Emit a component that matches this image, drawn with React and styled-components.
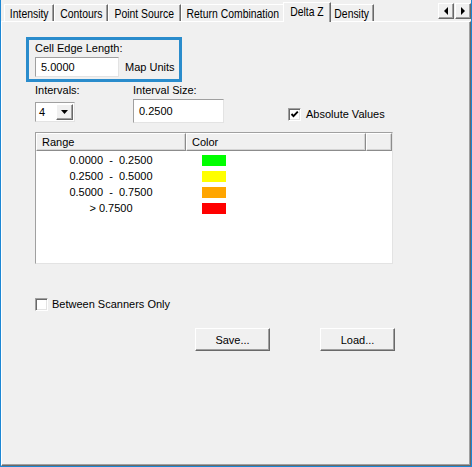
import React from "react";
import styled, { createGlobalStyle } from "styled-components";

const Global = createGlobalStyle`
  html, body { margin: 0; padding: 0; background: #f0f0f0; }
  body { font-family: "Liberation Sans", Arial, sans-serif; font-size: 11px; color: #000; }
  * { box-sizing: border-box; }
`;

const Window = styled.div`
  width: 472px;
  height: 467px;
  border-left: 1px solid #1c87d4;
  border-right: 1px solid #1c87d4;
  border-bottom: 1px solid #1c87d4;
  background: #f0f0f0;
  display: flex;
  flex-direction: column;
`;

const TabStrip = styled.div`
  height: 21px;
  flex: none;
  display: flex;
  align-items: flex-end;
  padding-left: 3px;
  position: relative;
  z-index: 2;
`;

const Tab = styled.div`
  width: ${(p) => p.$w}px;
  height: ${(p) => (p.$active ? 20 : 17)}px;
  margin: 0 ${(p) => (p.$active ? -2 : 0)}px ${(p) => (p.$active ? -1 : 0)}px;
  padding-bottom: ${(p) => (p.$active ? 2 : 0)}px;
  border-top: 1px solid #fff;
  border-left: 1px solid #fff;
  border-right: 1px solid #696969;
  box-shadow: inset -1px 0 #a0a0a0;
  background: #f0f0f0;
  display: flex;
  justify-content: center;
  align-items: center;
  white-space: nowrap;
  position: relative;
  z-index: ${(p) => (p.$active ? 2 : 1)};
`;

const TabText = styled.span`
  display: inline-block;
  font-family: "Liberation Sans", Arial, sans-serif;
  font-size: 13px;
  line-height: 15px;
  transform: scaleX(0.8);
  transform-origin: center;
`;

const ScrollArrows = styled.div`
  margin-left: auto;
  align-self: flex-start;
  margin-top: 3px;
  display: flex;
  gap: 1px;
`;

const ArrowButton = styled.div`
  width: 16px;
  height: 16px;
  background: #f0f0f0;
  border-top: 1px solid #fff;
  border-left: 1px solid #fff;
  border-right: 1px solid #696969;
  border-bottom: 1px solid #696969;
  box-shadow: inset -1px -1px #a0a0a0;
  display: flex;
  align-items: center;
  justify-content: center;
`;

const Panel = styled.div`
  flex: 1;
  border-top: 1px solid #fff;
  border-left: 1px solid #fff;
  border-right: 1px solid #696969;
  border-bottom: 1px solid #696969;
  box-shadow: inset -1px -1px #a0a0a0;
  padding: 15px 0 0 33px;
  display: flex;
  flex-direction: column;
  align-items: flex-start;
  position: relative;
  z-index: 1;
`;

const HighlightBox = styled.div`
  margin-left: -9px;
  width: 156px;
  border: 3px solid #2a8ccc;
  padding: 2px 0 2px 6px;
`;

const Label = styled.div`
  line-height: 13px;
  white-space: nowrap;
`;

const InputRow = styled.div`
  display: flex;
  align-items: center;
  margin-top: 2px;
`;

const TextInput = styled.div`
  width: ${(p) => p.$w}px;
  height: ${(p) => p.$h}px;
  margin-top: ${(p) => p.$mt || 0}px;
  background: #fff;
  border: 1px solid;
  border-color: #a0a0a0 #e3e3e3 #e3e3e3 #a0a0a0;
  padding-left: 5px;
  display: flex;
  align-items: center;
`;

const Unit = styled.span`
  margin-left: 6px;
`;

const ControlRow = styled.div`
  display: flex;
  margin-top: 2px;
`;

const Field = styled.div`
  width: ${(p) => p.$w}px;
  display: flex;
  flex-direction: column;
  align-items: flex-start;
`;

const Combo = styled.div`
  width: 40px;
  height: 20px;
  margin-top: 5px;
  background: #fff;
  border: 1px solid;
  border-color: #a0a0a0 #e3e3e3 #e3e3e3 #a0a0a0;
  display: flex;
  align-items: center;
  padding: 1px 1px 1px 3px;
`;

const ComboValue = styled.span`
  flex: 1;
`;

const DropButton = styled.div`
  width: 17px;
  height: 16px;
  background: #f0f0f0;
  border-top: 1px solid #fff;
  border-left: 1px solid #fff;
  border-right: 1px solid #696969;
  border-bottom: 1px solid #696969;
  box-shadow: inset -1px -1px #a0a0a0;
  display: flex;
  align-items: center;
  justify-content: center;
`;

const CheckLine = styled.label`
  display: flex;
  align-items: center;
  margin-top: ${(p) => p.$mt || 0}px;
  align-self: flex-start;
  line-height: 13px;
`;

const CheckBox = styled.span`
  width: 13px;
  height: 13px;
  background: #fff;
  border: 1px solid;
  border-color: #a0a0a0 #fff #fff #a0a0a0;
  box-shadow: inset 1px 1px #696969, inset -1px -1px #e3e3e3;
  display: flex;
  align-items: center;
  justify-content: center;
  margin-right: ${(p) => p.$gap}px;
`;

const ListView = styled.div`
  margin-top: 9px;
  width: 358px;
  height: 132px;
  background: #fff;
  border: 1px solid;
  border-color: #a0a0a0 #e3e3e3 #e3e3e3 #a0a0a0;
  display: flex;
  flex-direction: column;
`;

const HeaderRow = styled.div`
  display: flex;
  height: 18px;
`;

const HeaderCell = styled.div`
  width: ${(p) => (p.$w ? `${p.$w}px` : "auto")};
  flex: ${(p) => (p.$w ? "none" : 1)};
  background: #f0f0f0;
  border-top: 1px solid #fff;
  border-left: 1px solid #fff;
  border-right: 1px solid #8c8c8c;
  border-bottom: 1px solid #8c8c8c;
  box-shadow: inset -1px -1px #d4d4d4;
  padding-left: 5px;
  display: flex;
  align-items: center;
`;

const Rows = styled.div`
  padding-top: 1px;
`;

const Row = styled.div`
  display: flex;
  height: 16px;
  align-items: center;
`;

const RangeCell = styled.div`
  width: 150px;
  text-align: center;
  white-space: pre;
`;

const ColorCell = styled.div`
  padding-left: 16px;
  display: flex;
  align-items: center;
`;

const Swatch = styled.div`
  width: 24px;
  height: 11px;
  background: ${(p) => p.$c};
`;

const ButtonRow = styled.div`
  display: flex;
  gap: 50px;
  margin-left: 160px;
  margin-top: 17px;
`;

const Button = styled.div`
  width: 75px;
  height: 23px;
  background: #f0f0f0;
  border-top: 1px solid #fff;
  border-left: 1px solid #fff;
  border-right: 1px solid #696969;
  border-bottom: 1px solid #696969;
  box-shadow: inset -1px -1px #a0a0a0;
  display: flex;
  align-items: center;
  justify-content: center;
`;

const tabs = [
  { label: "Intensity", w: 50 },
  { label: "Contours", w: 54 },
  { label: "Point Source", w: 73 },
  { label: "Return Combination", w: 104 },
  { label: "Delta Z", w: 48, active: true },
  { label: "Density", w: 45 },
];

const ranges = [
  { text: "0.0000  -  0.2500", color: "#00ff00" },
  { text: "0.2500  -  0.5000", color: "#ffff00" },
  { text: "0.5000  -  0.7500", color: "#ffa500" },
  { text: "> 0.7500", color: "#ff0000" },
];

const Tri = ({ dir }) => {
  const pts = {
    left: "5,0 5,8 1,4",
    right: "1,0 1,8 5,4",
    down: "0,0 7,0 3.5,4",
  }[dir];
  const w = dir === "down" ? 7 : 6;
  const h = dir === "down" ? 4 : 8;
  return (
    <svg width={w} height={h} viewBox={`0 0 ${w} ${h}`}>
      <polygon points={pts} fill="#000" />
    </svg>
  );
};

const Check = () => (
  <svg width="9" height="9" viewBox="0 0 9 9">
    <polyline points="1.5,4 3.5,6.2 7.8,1.6" fill="none" stroke="#000" strokeWidth="1.9" />
  </svg>
);

export default function App() {
  return (
    <>
      <Global />
      <Window>
        <TabStrip>
          {tabs.map((t) => (
            <Tab key={t.label} $w={t.w} $active={t.active}>
              <TabText>{t.label}</TabText>
            </Tab>
          ))}
          <ScrollArrows>
            <ArrowButton>
              <Tri dir="left" />
            </ArrowButton>
            <ArrowButton>
              <Tri dir="right" />
            </ArrowButton>
          </ScrollArrows>
        </TabStrip>
        <Panel>
          <HighlightBox>
            <Label>Cell Edge Length:</Label>
            <InputRow>
              <TextInput $w={84} $h={20}>5.0000</TextInput>
              <Unit>Map Units</Unit>
            </InputRow>
          </HighlightBox>
          <ControlRow>
            <Field $w={98}>
              <Label>Intervals:</Label>
              <Combo>
                <ComboValue>4</ComboValue>
                <DropButton>
                  <Tri dir="down" />
                </DropButton>
              </Combo>
            </Field>
            <Field $w={155}>
              <Label>Interval Size:</Label>
              <TextInput $w={91} $h={24} $mt={2}>0.2500</TextInput>
            </Field>
            <CheckLine $mt={24}>
              <CheckBox $gap={5}>
                <Check />
              </CheckBox>
              Absolute Values
            </CheckLine>
          </ControlRow>
          <ListView>
            <HeaderRow>
              <HeaderCell $w={150}>Range</HeaderCell>
              <HeaderCell $w={180}>Color</HeaderCell>
              <HeaderCell />
            </HeaderRow>
            <Rows>
              {ranges.map((r) => (
                <Row key={r.text}>
                  <RangeCell>{r.text}</RangeCell>
                  <ColorCell>
                    <Swatch $c={r.color} />
                  </ColorCell>
                </Row>
              ))}
            </Rows>
          </ListView>
          <CheckLine $mt={34}>
            <CheckBox $gap={4} />
            Between Scanners Only
          </CheckLine>
          <ButtonRow>
            <Button>Save...</Button>
            <Button>Load...</Button>
          </ButtonRow>
        </Panel>
      </Window>
    </>
  );
}
